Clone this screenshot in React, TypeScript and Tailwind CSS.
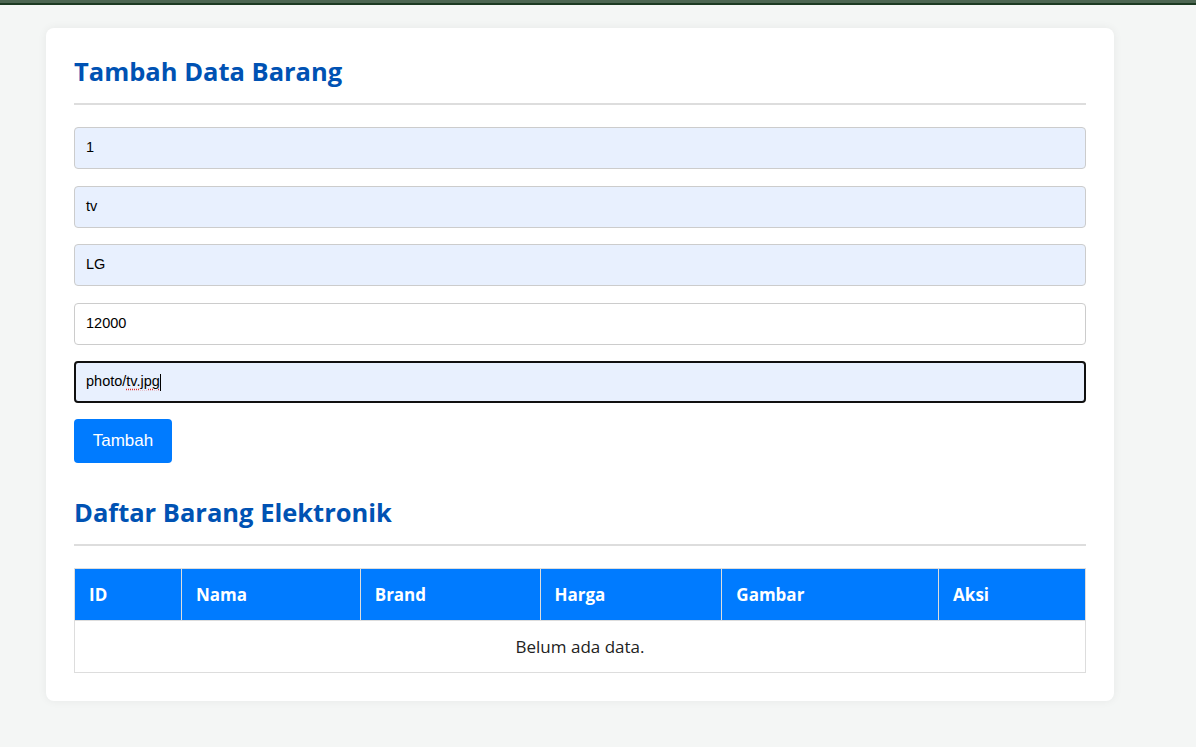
import React from "react";

const columns = [
  { label: "ID", w: "w-[107px]" },
  { label: "Nama", w: "w-[179px]" },
  { label: "Brand", w: "w-[180px]" },
  { label: "Harga", w: "w-[182px]" },
  { label: "Gambar", w: "w-[217px]" },
  { label: "Aksi", w: "w-[147px]" },
];

const fields = [
  { value: "1", filled: true },
  { value: "tv", filled: true },
  { value: "LG", filled: true },
  { value: "12000", filled: false },
];

export default function App() {
  return (
    <div className="min-h-[747px] bg-[#f4f6f5] font-['Open_Sans',sans-serif]">
      {/* window top strip */}
      <div className="h-[3px] bg-[#4d6652]" />
      <div className="h-[2px] bg-[#1c3a22]" />

      <div className="pl-[46px] pt-[23px]">
        <div className="w-[1068px] bg-white rounded-lg shadow-[0_0_10px_rgba(0,0,0,0.06)] p-7">
          <h2 className="text-[25.5px] leading-[31px] font-bold text-[#0052b3] pb-[16px] border-b-2 border-[#dddddd]">
            Tambah Data Barang
          </h2>

          <div className="mt-[22px] flex flex-col gap-[16.5px] font-['Liberation_Sans',sans-serif]">
            {fields.map((f, i) => (
              <div
                key={i}
                className={`h-[42px] rounded border border-[#cccccc] flex items-center px-[11px] text-[14.5px] text-black ${
                  f.filled ? "bg-[#e8f0fe]" : "bg-white"
                }`}
              >
                {f.value}
              </div>
            ))}
            <div className="h-[42px] rounded border-2 border-[#101010] bg-[#e8f0fe] flex items-center px-[10px] text-[14.5px] text-black">
              <span>photo/</span>
              <span className="underline decoration-dotted decoration-[#e03030] underline-offset-[3px]">tv.jpg</span>
              <span className="w-px h-[17px] bg-black" />
            </div>
          </div>

          <button className="mt-[16px] w-[98px] h-[44px] rounded bg-[#007bff] text-white text-[17px] font-['Liberation_Sans',sans-serif]">
            Tambah
          </button>

          <h2 className="mt-[34px] text-[25.5px] leading-[31px] font-bold text-[#0052b3] pb-[16px] border-b-2 border-[#dddddd]">
            Daftar Barang Elektronik
          </h2>

          <table className="mt-[22px] w-full border-collapse">
            <thead>
              <tr className="bg-[#007bff]">
                {columns.map((c) => (
                  <th
                    key={c.label}
                    className={`${c.w} h-[52px] text-left px-[14px] text-[17px] font-bold text-white border border-[#dddddd]`}
                  >
                    {c.label}
                  </th>
                ))}
              </tr>
            </thead>
            <tbody>
              <tr>
                <td colSpan={6} className="h-[52px] text-center text-[17px] text-[#222] border border-[#dddddd]">
                  Belum ada data.
                </td>
              </tr>
            </tbody>
          </table>
        </div>
      </div>
    </div>
  );
}
